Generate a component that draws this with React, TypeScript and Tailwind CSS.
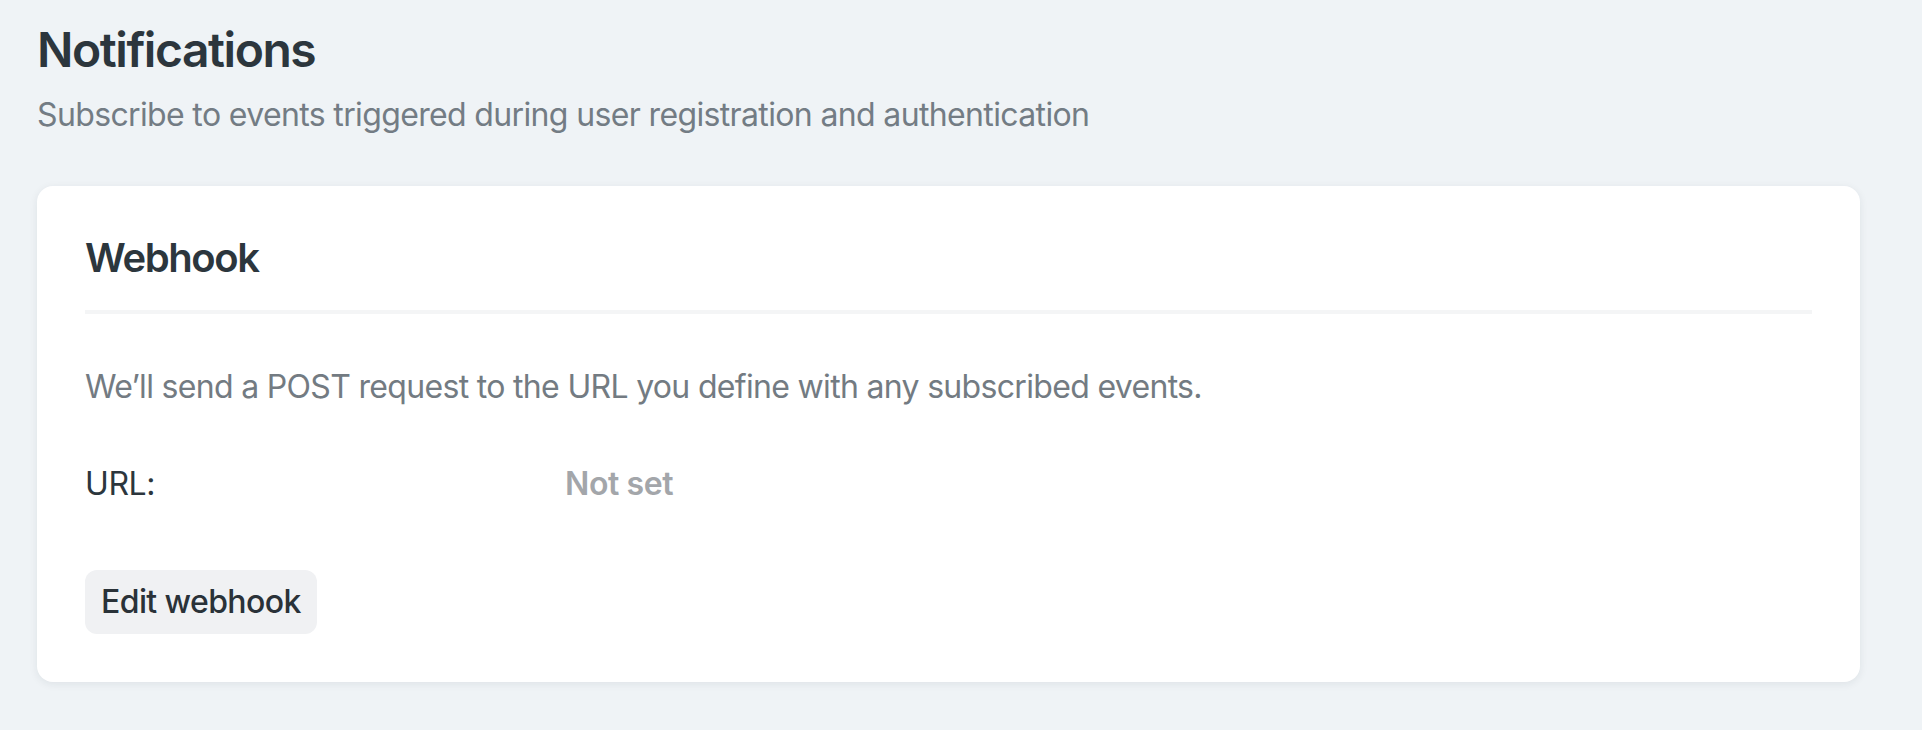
export default function App() {
  return (
    <div className="min-h-[730px] bg-[#eff3f6] pl-[37px] pr-[62px] pt-5 pb-10 font-['Inter',sans-serif] text-[#2c363d]">
      {/* Page header */}
      <h1 className="text-[48px] font-semibold leading-[60px] tracking-[-1.45px]">Notifications</h1>
      <p className="mt-[15px] text-[32px] leading-[40px] tracking-[-0.64px] text-[#737c84]">
        Subscribe to events triggered during user registration and authentication
      </p>

      {/* Webhook card */}
      <div className="mt-[51px] rounded-2xl bg-white px-12 pt-12 pb-12 shadow-[0_2px_8px_rgba(30,40,50,0.08)]">
        <h2 className="text-[40px] font-semibold leading-[48px] tracking-[-1.4px]">Webhook</h2>
        <div className="mt-[28px] h-[4px] bg-[#f4f5f6]" />

        <p className="mt-[53px] text-[32px] leading-[40px] tracking-[-0.68px] text-[#737b82]">
          We’ll send a POST request to the URL you define with any subscribed events.
        </p>

        <div className="mt-[57px] grid grid-cols-[480px_1fr] text-[32px] leading-[40px] tracking-[-0.4px]">
          <span>URL:</span>
          <span className="font-semibold text-[#a3a6aa]">Not set</span>
        </div>

        <button className="mt-[66px] rounded-xl bg-[#f0f1f3] px-4 py-3 text-[32px] font-medium leading-[40px] tracking-[-0.6px] text-[#2a3238]">
          Edit webhook
        </button>
      </div>
    </div>
  );
}
